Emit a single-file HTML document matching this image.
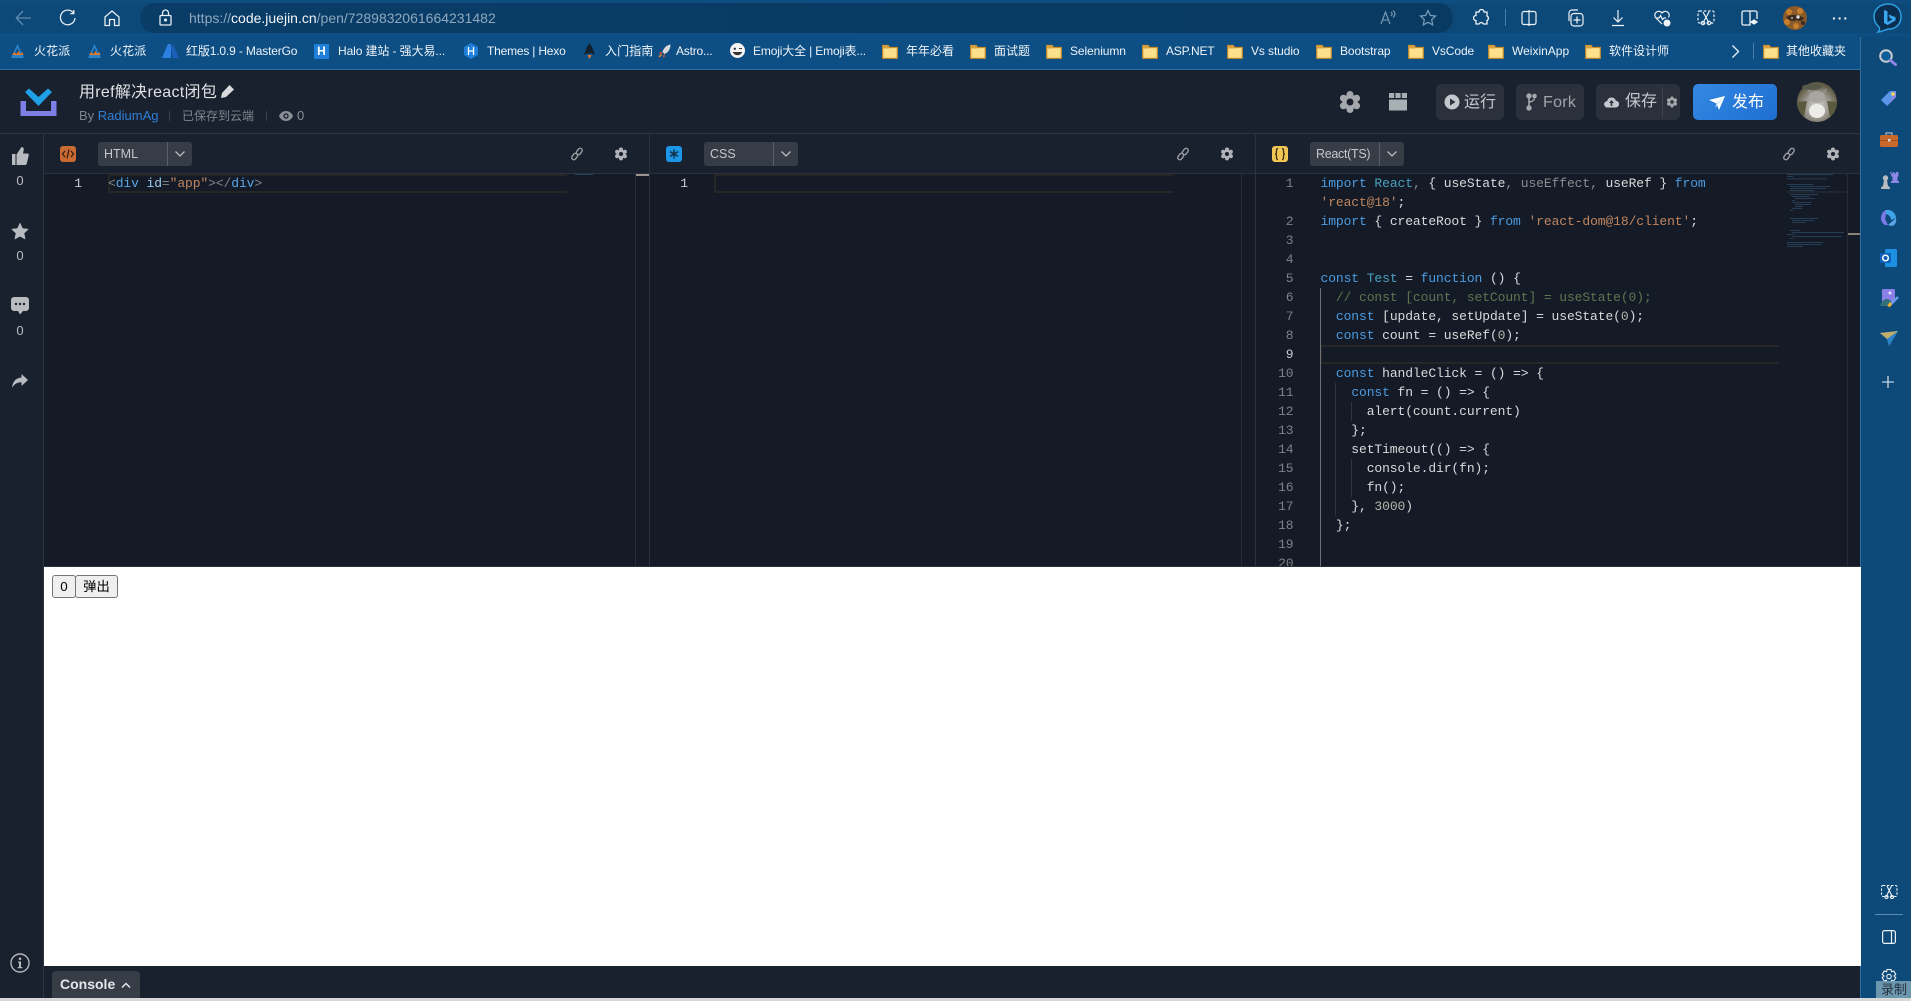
<!DOCTYPE html>
<html lang="zh"><head><meta charset="utf-8"><title>用ref解决react闭包</title>
<style>
*{box-sizing:border-box}
html,body{margin:0;padding:0;width:1911px;height:1001px;overflow:hidden;background:#1a212e;font-family:"Liberation Sans","Noto Sans CJK SC",sans-serif}
.a,.t,svg.i{position:absolute}
.t{white-space:nowrap;line-height:16px}
.bm{font-size:12px;color:#eef3f7;top:43px}
.dd{position:absolute;top:142px;width:94px;height:24px;background:#363d47;border-radius:3px;color:#c4c7cb;font-size:12.5px;line-height:24px;padding-left:6px}
.dd i{position:absolute;left:69px;top:0;width:1px;height:24px;background:#5a6069}
.dd svg{position:absolute;left:76px;top:8px}
.code{position:absolute;top:174px;height:392px;background:#141b26;overflow:hidden}
.ln{position:absolute;right:0;font:13px/19px "Liberation Mono",monospace;letter-spacing:-.1px;color:#7d8287;text-align:right}
.c{position:absolute;white-space:pre;font:13px/19px "Liberation Mono",monospace;letter-spacing:-.1px;color:#d8dadc}
.k{color:#4c9be0}.s{color:#c08560}.g{color:#8a8d90}.m{color:#4a9fc0}.n{color:#b0b8ac}.cm{color:#5d7550}.b{color:#58a5e8}.l{color:#9ecbf0}.p{color:#808488}
.hb{position:absolute;top:84px;height:36px;background:#2a313c;border-radius:5px}
.hl{position:absolute;background:#2c323d}
</style></head><body>
<svg width="0" height="0" style="position:absolute"><defs>
<symbol id="gear" viewBox="-10 -10 20 20"><g fill="currentColor"><circle r="6.4"/><circle cx="0" cy="-6.3" r="2.9"/><circle cx="5.5" cy="-3.15" r="2.9"/><circle cx="5.5" cy="3.15" r="2.9"/><circle cx="0" cy="6.3" r="2.9"/><circle cx="-5.5" cy="3.15" r="2.9"/><circle cx="-5.5" cy="-3.15" r="2.9"/></g><circle r="2.9" fill="var(--h,#1a212e)"/></symbol>
<symbol id="folder" viewBox="0 0 16 15"><path d="M.7 1.5h5.5l1.2 2h7.9v10.8H.7z" fill="#fde08c" stroke="#c98d28" stroke-width="1.2"/><path d="M.7 1.5h5.5l1.2 2v1H.7z" fill="#d9a03f"/></symbol>
<symbol id="link" viewBox="0 0 14 14"><g fill="none" stroke="currentColor" stroke-width="1.4"><rect x="7.2" y="1" width="4.2" height="7" rx="2.1" transform="rotate(38 9.3 4.5)"/><rect x="2.6" y="6" width="4.2" height="7" rx="2.1" transform="rotate(38 4.7 9.5)"/></g></symbol>
<symbol id="chev" viewBox="0 0 12 8"><path d="M1.5 1.5 6 6l4.5-4.5" fill="none" stroke="currentColor" stroke-width="1.3"/></symbol>
</defs></svg>

<!-- browser chrome -->
<div class="a" style="left:0;top:0;width:1911px;height:69px;background:#0d4d80"></div>
<div class="a" style="left:0;top:3px;width:1911px;height:30px;background:#0c4878"></div>
<div class="a" style="left:140px;top:3px;width:1313px;height:30px;border-radius:15px;background:linear-gradient(90deg,#093d68,#083a62)"></div>
<div class="a" style="left:0;top:33px;width:1861px;height:36px;background:#0d4f84"></div>
<div class="a" style="left:0;top:69px;width:1861px;height:1px;background:#2d6f9f"></div>
<svg class="i" style="left:14px;top:9px" width="20" height="18" viewBox="0 0 20 18" fill="none" stroke="#5d8cb0" stroke-width="1.3"><path d="M17 9H2.500M9 2 2.300 9 9 16"/></svg>
<svg class="i" style="left:59px;top:9px" width="18" height="18" viewBox="0 0 18 18" fill="none" stroke="#e8eef3" stroke-width="1.3"><path d="M14.500 4A7.300 7.300 0 1 0 16 9"/><path d="M14.800 1v3.600h-3.600"/></svg>
<svg class="i" style="left:104px;top:9px" width="16" height="18" viewBox="0 0 16 18" fill="none" stroke="#e8eef3" stroke-width="1.3"><path d="M1 8 8 2l7 6v8.500h-4.500v-6h-5v6H1z"/></svg>
<svg class="i" style="left:159px;top:9px" width="13" height="17" viewBox="0 0 13 17" fill="none" stroke="#e8eef3" stroke-width="1.3"><rect x="1" y="6.500" width="11" height="9.500" rx="1"/><path d="M3.500 6.500V4a3 3 0 0 1 6 0v2.500"/><circle cx="6.500" cy="11" r=".9" fill="#e8eef3"/></svg>
<span class="t" style="left:189px;top:10px;font-size:14px;letter-spacing:0;color:#8fa8bd">https://<span style="color:#f2f5f8">code.juejin.cn</span>/pen/7289832061664231482</span>
<svg class="i" style="left:1380px;top:9px" width="16" height="17" viewBox="0 0 16 17" fill="none" stroke="#7f9fb8" stroke-width="1.1"><path d="M1 15 5.500 3 10 15M2.500 11h6M11 3c1.500 1 1.500 3 0 4M13 1.500c2.500 2 2.500 5 0 7"/></svg>
<svg class="i" style="left:1419px;top:9px" width="18" height="18" viewBox="0 0 18 18" fill="none" stroke="#7f9fb8" stroke-width="1.2"><path d="m9 1.500 2.300 4.900 5.200.7-3.800 3.600 1 5.200L9 13.300l-4.700 2.600 1-5.200L1.500 7.100l5.200-.7z"/></svg>
<svg class="i" style="left:1473px;top:9px" width="17" height="17" viewBox="0 0 17 17" fill="none" stroke="#eef3f7" stroke-width="1.3"><path d="M6 3a2.500 2.500 0 0 1 5 0h3v4a2.500 2.500 0 0 1 0 4.500V15h-3.500a2.500 2.500 0 0 0-4.500 0H3v-3.500a2.500 2.500 0 0 1 0-5V3z"/></svg>
<div class="a" style="left:1505px;top:9px;width:1px;height:17px;background:#4a7ea6"></div>
<svg class="i" style="left:1521px;top:10px" width="16" height="16" viewBox="0 0 16 16" fill="none" stroke="#eef3f7" stroke-width="1.2"><rect x="1" y="1.500" width="14" height="13" rx="2"/><path d="M8 0v16"/></svg>
<svg class="i" style="left:1566px;top:9px" width="18" height="18" viewBox="0 0 18 18" fill="none" stroke="#eef3f7" stroke-width="1.2"><rect x="5" y="4.500" width="12" height="12.500" rx="3"/><path d="M11 7.500v7M7.500 11h7M3 12V4a3 3 0 0 1 3-3h6"/></svg>
<svg class="i" style="left:1610px;top:9px" width="16" height="18" viewBox="0 0 16 18" fill="none" stroke="#eef3f7" stroke-width="1.2"><path d="M8 1v12M3.500 8.500 8 13l4.500-4.500M2 16.500h12"/></svg>
<svg class="i" style="left:1653px;top:9px" width="18" height="18" viewBox="0 0 18 18" fill="none" stroke="#eef3f7" stroke-width="1.2"><path d="M9 15 2.500 8.500A3.900 3.900 0 0 1 9 4a3.900 3.900 0 0 1 6.500 4.500M3 9h3l1.500-2.500 2 4L11 9h2"/><circle cx="14" cy="14" r="3.500" fill="#eef3f7" stroke="none"/></svg>
<svg class="i" style="left:1697px;top:10px" width="18" height="16" viewBox="0 0 18 16" fill="none" stroke="#eef3f7" stroke-width="1.2"><rect x="1" y="1" width="16" height="12" rx="1.500" stroke-dasharray="2.500 1.800"/><path d="m6 2 5 9M12 2l-5 9"/><circle cx="6" cy="13" r="1.700"/><circle cx="12" cy="13" r="1.700"/></svg>
<svg class="i" style="left:1741px;top:10px" width="17" height="16" viewBox="0 0 17 16" fill="none" stroke="#eef3f7" stroke-width="1.3"><path d="M9 1H2.500A1.500 1.500 0 0 0 1 2.500v11A1.500 1.500 0 0 0 2.500 15H9zM9 1h5.500A1.500 1.500 0 0 1 16 2.500V9"/><path d="M10 12l3-2 3 2-3 2z" fill="#eef3f7"/></svg>
<svg class="i" style="left:1783px;top:6px" width="24" height="24" viewBox="0 0 24 24"><circle cx="12" cy="12" r="12" fill="#8a5a28"/><g fill="#c77f2e"><circle cx="6" cy="6" r="3"/><circle cx="17" cy="5" r="3"/><circle cx="4" cy="16" r="3"/><circle cx="13" cy="20" r="3"/></g><g fill="#3a2a20"><path d="M3 11c5-3 12-3 18 1-2 4-5 3-8 2-3 2-7 1-10-3z"/><circle cx="20" cy="17" r="2"/></g><circle cx="15" cy="11" r="1.700" fill="#ddd"/><circle cx="9" cy="12" r="1" fill="#b8b8b0"/></svg>
<span class="t" style="left:1832px;top:10px;font-size:14px;letter-spacing:1px;color:#eef3f7;font-weight:bold">···</span>
<svg class="i" style="left:1873px;top:2px" width="30" height="32" viewBox="0 0 30 32"><path d="M15 2c7.500 0 13 5 13 12.500S23 27 16 27c-3 0-7 3-11 3 2-2 2-4 1-5-3-2.500-5-6-5-10.500C1 7 7.500 2 15 2z" fill="#0a2e50" stroke="#2d9fe0" stroke-width="1.500"/><path d="M11 8l3.500 1.200v11l5-3-2.700-1.200-1.200-3.500 7 2.700v3.200l-8 4.600-3.600-2z" fill="#3aa8f0"/></svg>

<svg class="i" style="left:11px;top:44px" width="13" height="14" viewBox="0 0 13 14"><path d="M6.500 0 0 14h13z M6.500 4l3 6h-6z" fill="#2c82c8" fill-rule="evenodd"/><path d="M1 11l2.500-3 2 2 2-3 2 3 2-2 1 3z" fill="#e07a2c"/></svg><span class="t bm" style="left:34px;letter-spacing:.15px">火花派</span>
<svg class="i" style="left:88px;top:44px" width="13" height="14" viewBox="0 0 13 14"><path d="M6.500 0 0 14h13z M6.500 4l3 6h-6z" fill="#2c82c8" fill-rule="evenodd"/><path d="M1 11l2.500-3 2 2 2-3 2 3 2-2 1 3z" fill="#e07a2c"/></svg><span class="t bm" style="left:110px;letter-spacing:.15px">火花派</span>
<svg class="i" style="left:162px;top:44px" width="17" height="14" viewBox="0 0 17 14"><path d="M0 14 6 0h3v14z" fill="#2d7fe0"/><path d="M9 5l2-5 6 14h-6z" fill="#1c5fb8"/></svg><span class="t bm" style="left:186px;letter-spacing:-.15px">红版1.0.9 - MasterGo</span>
<div class="a" style="left:314px;top:44px;width:15px;height:15px;background:#1f7fd9;color:#fff;font:bold 12px/15px 'Liberation Sans';text-align:center">H</div><span class="t bm" style="left:338px;letter-spacing:-.1px">Halo 建站 - 强大易...</span>
<svg class="i" style="left:464px;top:43px" width="14" height="16" viewBox="0 0 14 16"><path d="M7 0l7 4v8l-7 4-7-4V4z" fill="#1f7fd9"/><path d="M4.500 4v8M9.500 4v8M4.500 8h5" stroke="#fff" stroke-width="1.300"/></svg><span class="t bm" style="left:487px;letter-spacing:-.2px">Themes | Hexo</span>
<svg class="i" style="left:584px;top:43px" width="11" height="16" viewBox="0 0 11 16"><path d="M5.500 0C3 3 1.500 8 0 12l3-1.500h5L11 12C9.500 8 8 3 5.500 0z" fill="#10202f"/><path d="M3.500 12 5.500 16l2-4z" fill="#e0762c"/></svg><span class="t bm" style="left:605px;letter-spacing:.1px">入门指南</span>
<svg class="i" style="left:658px;top:44px" width="13" height="14" viewBox="0 0 13 14"><path d="M12.500.5c-4 .5-7 3.500-8 7.500l2 2c3.500-1.500 6-4.500 6-9.500z" fill="#d8d8d8"/><path d="M4.500 8 2 8l-1 2 3-.5zM6.500 10l.5 2.500-2 1 .5-3z" fill="#c8553a"/><path d="M1 13l2.500-2.500" stroke="#e88a2a" stroke-width="1.500"/></svg><span class="t bm" style="left:676px;letter-spacing:-.2px">Astro...</span>
<svg class="i" style="left:730px;top:43px" width="15" height="15" viewBox="0 0 15 15"><circle cx="7.500" cy="7.500" r="7.500" fill="#f4f4f4"/><circle cx="4.800" cy="5.800" r="1.200" fill="#333"/><path d="M9 5.500h3M3.500 9.500c2 3 6 3 8 0z" stroke="#333" fill="#333" stroke-width=".9"/></svg><span class="t bm" style="left:753px;letter-spacing:-.15px">Emoji大全 | Emoji表...</span>
<svg class="i" style="left:882px;top:44px" width="16" height="15"><use href="#folder"/></svg><span class="t bm" style="left:906px">年年必看</span>
<svg class="i" style="left:970px;top:44px" width="16" height="15"><use href="#folder"/></svg><span class="t bm" style="left:994px">面试题</span>
<svg class="i" style="left:1046px;top:44px" width="16" height="15"><use href="#folder"/></svg><span class="t bm" style="left:1070px;letter-spacing:-.1px">Seleniumn</span>
<svg class="i" style="left:1142px;top:44px" width="16" height="15"><use href="#folder"/></svg><span class="t bm" style="left:1166px;letter-spacing:-.2px">ASP.NET</span>
<svg class="i" style="left:1227px;top:44px" width="16" height="15"><use href="#folder"/></svg><span class="t bm" style="left:1251px;letter-spacing:-.1px">Vs studio</span>
<svg class="i" style="left:1316px;top:44px" width="16" height="15"><use href="#folder"/></svg><span class="t bm" style="left:1340px;letter-spacing:-.1px">Bootstrap</span>
<svg class="i" style="left:1408px;top:44px" width="16" height="15"><use href="#folder"/></svg><span class="t bm" style="left:1432px;letter-spacing:-.1px">VsCode</span>
<svg class="i" style="left:1488px;top:44px" width="16" height="15"><use href="#folder"/></svg><span class="t bm" style="left:1512px;letter-spacing:0">WeixinApp</span>
<svg class="i" style="left:1585px;top:44px" width="16" height="15"><use href="#folder"/></svg><span class="t bm" style="left:1609px">软件设计师</span>
<svg class="i" style="left:1731px;top:44px" width="9" height="15" viewBox="0 0 9 15" fill="none" stroke="#eef3f7" stroke-width="1.300"><path d="m1.500 1.500 6 6-6 6"/></svg>
<div class="a" style="left:1753px;top:43px;width:1px;height:16px;background:#4a7ea6"></div>
<svg class="i" style="left:1763px;top:44px" width="16" height="15"><use href="#folder"/></svg><span class="t bm" style="left:1786px">其他收藏夹</span>

<!-- right edge panel -->
<div class="a" style="left:1861px;top:37px;width:50px;height:964px;background:#0d4a7a"></div>
<div class="a" style="left:1860px;top:37px;width:1px;height:964px;background:#2d6f9f"></div>
<svg class="i" style="left:1878px;top:49px" width="20" height="18" viewBox="0 0 20 18"><circle cx="8" cy="7" r="5.800" fill="#0f5e9c" stroke="#c8ccd0" stroke-width="2"/><path d="m12.500 11.500 5 4" stroke="#8f87e8" stroke-width="3" stroke-linecap="round"/></svg>
<svg class="i" style="left:1880px;top:90px" width="17" height="17" viewBox="0 0 17 17"><path d="M1 10 10 1h6v6l-9 9z" fill="#5c96e8"/><path d="M9 14l7-7V1" fill="#8f87e8"/><circle cx="13" cy="4" r="1.800" fill="#f4d35e"/></svg>
<svg class="i" style="left:1880px;top:131px" width="18" height="16" viewBox="0 0 18 16"><path d="M6 4V2h6v2" fill="none" stroke="#b0b0b8" stroke-width="1.300"/><rect y="4" width="18" height="12" rx="1.500" fill="#c8682a"/><rect y="9" width="18" height="1" fill="#a05020"/><rect x="8" y="8" width="2.500" height="2.500" fill="#d8d8d8"/></svg>
<svg class="i" style="left:1880px;top:171px" width="19" height="19" viewBox="0 0 19 19"><path d="M10 1h1.500v1.500h1.500V1h1.500v1.500H16V1h2.500v4l-1 1v4h1.500v2h-8v-2h1.500V6l-1-1z" fill="#8f87e8"/><circle cx="5.500" cy="7" r="2.700" fill="#b8bcc0"/><path d="M4 9h3l1 6H3zM1 18c0-2 1-3 3-3h3c2 0 3 1 3 3z" fill="#b8bcc0"/></svg>
<svg class="i" style="left:1880px;top:209px" width="17" height="19" viewBox="0 0 17 19"><path d="M6 1c5-1 10 3 10 8l-5 2c0-2-1-5-5-6z" fill="#3fa5e8"/><path d="M1 9c0-3 2-7 5-8 0 3 0 6-1 9l3 6c-4 1-7-3-7-7z" fill="#7c79e8"/><path d="M8 16l8-7c1 5-2 10-8 7z" fill="#5aa5e8"/></svg>
<svg class="i" style="left:1880px;top:249px" width="17" height="18" viewBox="0 0 17 18"><rect x="5" y="0" width="12" height="18" rx="1.500" fill="#1d8fe0"/><rect x="0" y="4" width="11" height="10" rx="1.500" fill="#0f60b8"/><circle cx="5.500" cy="9" r="2.800" fill="none" stroke="#fff" stroke-width="1.500"/></svg>
<svg class="i" style="left:1880px;top:288px" width="20" height="20" viewBox="0 0 20 20"><rect x="2" y="1" width="13" height="14" rx="1.500" fill="#8b7fe8"/><path d="M0 18c1-4 4-7 7-7s5 3 5 6l-3 1z" fill="#2f7079"/><circle cx="10" cy="5" r="1.500" fill="#e8e4ff"/><path d="M10 17 18 9" stroke="#6b9de8" stroke-width="2.500"/><path d="M8.500 18.500 11 15" stroke="#f0b030" stroke-width="3"/></svg>
<svg class="i" style="left:1880px;top:331px" width="18" height="15" viewBox="0 0 18 15"><path d="M0 2 18 0 9 15 7 8z" fill="#3fa5e8"/><path d="M18 0 7 8 9 15z" fill="#2b82c8"/><path d="M0 2 18 0 7 8z" fill="#f0b040" opacity=".75"/></svg>
<svg class="i" style="left:1882px;top:376px" width="12" height="12" viewBox="0 0 12 12" stroke="#e8eef3" stroke-width="1.100"><path d="M6 0v12M0 6h12"/></svg>
<svg class="i" style="left:1881px;top:885px" width="17" height="14" viewBox="0 0 17 14" fill="none" stroke="#eef3f7" stroke-width="1.100"><rect x=".5" y=".5" width="15.500" height="11" rx="1.500" stroke-dasharray="2.500 1.500"/><path d="m6 1 4.500 9M10.500 1 6 10"/><circle cx="5.500" cy="12" r="1.500"/><circle cx="11" cy="12" r="1.500"/></svg>
<div class="a" style="left:1875px;top:914px;width:28px;height:1px;background:#5b8db3"></div>
<svg class="i" style="left:1882px;top:930px" width="14" height="14" viewBox="0 0 14 14" fill="none" stroke="#eef3f7" stroke-width="1.200"><rect x=".6" y=".6" width="12.800" height="12.800" rx="2"/><path d="M9.500.6v12.800"/></svg>
<svg class="i" style="left:1881px;top:968px" width="16" height="17" viewBox="0 0 16 17" fill="none" stroke="#eef3f7" stroke-width="1.100"><path d="M6 1.500h4l.5 2.300 2.300-.8 2 3.400-1.800 1.600 1.800 1.600-2 3.400-2.300-.8-.5 2.300H6l-.5-2.300-2.300.8-2-3.400L3 8 1.200 6.400l2-3.400 2.300.8z"/><circle cx="8" cy="8.500" r="2.200"/></svg>
<div class="a" style="left:1876px;top:981px;width:35px;height:17px;background:#6d96af;color:#24323d;font-size:13px;line-height:17px;padding-left:5px">录制</div>

<!-- header -->
<div class="a" style="left:0;top:70px;width:1860px;height:63px;background:#1a212e"></div>
<div class="a" style="left:0;top:133px;width:1860px;height:1px;background:#2f353f"></div>
<svg class="i" style="left:20px;top:87px" width="37" height="30" viewBox="0 0 37 30"><path d="M.5 14H6v10h25V14h5.500v15H.5z" fill="#7d7fe6"/><path d="M9 1.500 18.500 10l9.500-8.500 4 3.500-13.500 14L5 5z" fill="#1fa0e6"/></svg>
<span class="t" style="left:79px;top:84px;font-size:16px;line-height:18px;letter-spacing:.3px;color:#dfe1e4">用ref解决react闭包</span>
<svg class="i" style="left:221px;top:85px" width="13" height="13" viewBox="0 0 13 13"><path d="M8.500 0 13 4.500 5 12 0 13l1-5z" fill="#d8dadc"/></svg>
<span class="t" style="left:79px;top:108px;font-size:13px;color:#7f858e">By <span style="color:#2f7fd8">RadiumAg</span></span>
<div class="a" style="left:169px;top:111px;width:1px;height:10px;background:#3a404a"></div>
<span class="t" style="left:182px;top:108px;font-size:12px;color:#7f858e">已保存到云端</span>
<div class="a" style="left:266px;top:111px;width:1px;height:10px;background:#3a404a"></div>
<svg class="i" style="left:279px;top:110px" width="14" height="12" viewBox="0 0 14 12"><path d="M7 1C3.500 1 1 3.500 0 6c1 2.500 3.500 5 7 5s6-2.500 7-5c-1-2.500-3.500-5-7-5z" fill="#8a8f97"/><circle cx="7" cy="6" r="2.700" fill="#1a212e"/><circle cx="7" cy="6" r="1.400" fill="#8a8f97"/></svg>
<span class="t" style="left:297px;top:108px;font-size:13px;color:#8a8f97">0</span>

<svg class="i" style="left:1338px;top:90px;color:#a4a7ab" width="24" height="24"><use href="#gear"/></svg>
<svg class="i" style="left:1389px;top:93px" width="18" height="18" viewBox="0 0 18 18" fill="#a9b0b4"><rect width="5.200" height="5"/><rect x="6.400" width="5.200" height="5"/><rect x="12.800" width="5.200" height="5"/><rect y="6.500" width="18" height="11"/></svg>
<div class="hb" style="left:1436px;width:68px"></div>
<svg class="i" style="left:1444px;top:94px" width="16" height="16" viewBox="0 0 16 16"><circle cx="8" cy="8" r="7.500" fill="#c4c7cb"/><path d="M6 4.500v7l5.500-3.500z" fill="#2a313c"/></svg>
<span class="t" style="left:1464px;top:94px;font-size:16px;line-height:18px;color:#c4c7cb">运行</span>
<div class="hb" style="left:1516px;width:68px"></div>
<svg class="i" style="left:1526px;top:93px" width="11" height="18" viewBox="0 0 11 18" fill="#a4a7ab"><circle cx="3" cy="3" r="2.700"/><circle cx="8.500" cy="3" r="2.300"/><circle cx="3" cy="15" r="2.700"/><path d="M2.200 3h1.600v12H2.200zM8 4.500h1.200C9 8 6.500 9 3 10V8.500c2.500-.5 5-1.500 5-4z"/></svg>
<span class="t" style="left:1543px;top:94px;font-size:16px;line-height:18px;letter-spacing:.3px;color:#a0a4a9">Fork</span>
<div class="hb" style="left:1596px;width:84px"></div>
<div class="a" style="left:1662px;top:87px;width:1px;height:30px;background:#3f4650"></div>
<svg class="i" style="left:1604px;top:96px" width="15" height="12" viewBox="0 0 15 12"><path d="M3.500 11.500a3.200 3.200 0 0 1-.4-6.400 4.500 4.500 0 0 1 8.700-.4A3.400 3.400 0 0 1 11.500 11.500z" fill="#c4c7cb"/><path d="M7.500 4 5 7h1.700v3h1.600V7H10z" fill="#2a313c"/></svg>
<span class="t" style="left:1625px;top:93px;font-size:16px;line-height:18px;color:#c4c7cb">保存</span>
<svg class="i" style="--h:#2a313c;left:1666px;top:96px;color:#a4a7ab" width="12" height="12"><use href="#gear"/></svg>
<div class="hb" style="left:1693px;width:84px;background:linear-gradient(135deg,#3488e2,#1f6fd2)"></div>
<svg class="i" style="left:1709px;top:96px" width="16" height="14" viewBox="0 0 16 14"><path d="M0 4 16 0 10 14 7.500 7.500z" fill="#fff"/><path d="M16 0 7.500 7.500 6 12z" fill="#d6e6f8"/></svg>
<span class="t" style="left:1732px;top:94px;font-size:16px;line-height:18px;color:#fff">发布</span>
<svg class="i" style="left:1797px;top:82px" width="40" height="40" viewBox="0 0 40 40"><defs><radialGradient id="cat" cx=".5" cy=".6" r=".55"><stop offset="0" stop-color="#d8d8d2"/><stop offset=".6" stop-color="#96938a"/><stop offset="1" stop-color="#5f5a44"/></radialGradient></defs><ellipse cx="20" cy="20" rx="20" ry="20" fill="url(#cat)"/><path d="M10 6l2 9h16l2-9-7 4h-6z" fill="#8f8c84"/><ellipse cx="20" cy="15" rx="8" ry="6" fill="#a9a6a0"/><ellipse cx="15" cy="5" rx="10" ry="3" fill="#575a4a"/><ellipse cx="20" cy="29" rx="8" ry="7" fill="#ecece8"/><path d="M0 20a20 20 0 0 0 7 15l3-16zM40 20a20 20 0 0 1-7 15l-3-16z" fill="#5c5a3e"/></svg>

<!-- sidebar -->
<div class="a" style="left:0;top:134px;width:44px;height:864px;background:#1a212e"></div>
<div class="a" style="left:43px;top:134px;width:1px;height:864px;background:#2f353f"></div>
<svg class="i" style="left:12px;top:147px" width="17" height="18" viewBox="0 0 17 18" fill="#b8bbbf"><rect y="7" width="3.500" height="11"/><path d="M4.500 7.500 9.500 0c1.500 0 2.300 1 2.300 2.500L11 6.500h4.500c1 0 1.500 1 1.200 2l-2 8.200c-.2.800-.8 1.300-1.700 1.300H4.500z"/></svg>
<span class="t" style="left:16px;top:173px;font-size:13px;color:#b9bdc2;width:8px;text-align:center">0</span>
<svg class="i" style="left:11px;top:222px" width="18" height="18" viewBox="0 0 18 18" fill="#b8bbbf"><path d="m9 .5 2.700 5.700 6.100.8-4.500 4.300 1.200 6.200L9 14.500l-5.500 3 1.200-6.200L.2 7l6.100-.8z"/></svg>
<span class="t" style="left:16px;top:248px;font-size:13px;color:#b9bdc2;width:8px;text-align:center">0</span>
<svg class="i" style="left:11px;top:297px" width="18" height="18" viewBox="0 0 18 18"><path d="M3 0h12a3 3 0 0 1 3 3v8a3 3 0 0 1-3 3h-3l-3 3.500L7 14H3a3 3 0 0 1-3-3V3a3 3 0 0 1 3-3z" fill="#b8bbbf"/><circle cx="5" cy="7" r="1.200" fill="#1a212e"/><circle cx="9" cy="7" r="1.200" fill="#1a212e"/><circle cx="13" cy="7" r="1.200" fill="#1a212e"/></svg>
<span class="t" style="left:16px;top:323px;font-size:13px;color:#b9bdc2;width:8px;text-align:center">0</span>
<svg class="i" style="left:12px;top:374px" width="16" height="14" viewBox="0 0 16 14"><path d="M9.500 0 16 6l-6.500 6V8.300C5 8.300 2.500 10 0 14c.5-6 3.500-10 9.500-10.500z" fill="#b8bbbf"/></svg>
<svg class="i" style="left:10px;top:953px" width="20" height="20" viewBox="0 0 20 20"><circle cx="10" cy="10" r="9" fill="none" stroke="#b4b7bb" stroke-width="1.400"/><circle cx="10" cy="5.800" r="1.300" fill="#b4b7bb"/><path d="M8 8.500h3v5.500h1.300v1.200H7.700V14H9V9.700H8z" fill="#b4b7bb"/></svg>

<!-- editor toolbars -->
<div class="a" style="left:44px;top:134px;width:1816px;height:40px;background:#1a212e"></div>
<div class="hl" style="left:44px;top:173px;width:1816px;height:1px"></div>
<div class="hl" style="left:649px;top:134px;width:1px;height:432px"></div>
<div class="hl" style="left:1255px;top:134px;width:1px;height:432px"></div>

<svg class="i" style="left:60px;top:146px" width="16" height="16" viewBox="0 0 16 16"><rect width="16" height="16" rx="3" fill="#c96a30"/><path d="M5 5 2.500 8 5 11M11 5l2.500 3-2.500 3M9 3.500 7 12.500" fill="none" stroke="#2a1a10" stroke-width="1.200"/></svg>
<div class="dd" style="left:98px">HTML<i></i><svg width="12" height="8" style="color:#b8bbbf"><use href="#chev"/></svg></div>
<svg class="i" style="left:570px;top:147px;color:#9a9ea3" width="14" height="14"><use href="#link"/></svg>
<svg class="i" style="left:614px;top:147px;color:#b0b3b7" width="14" height="14"><use href="#gear"/></svg>

<svg class="i" style="left:666px;top:146px" width="16" height="16" viewBox="0 0 16 16"><rect width="16" height="16" rx="3" fill="#1c97e8"/><path d="M8 3.500v9M4 5.700l8 4.600M12 5.700l-8 4.600" stroke="#13324a" stroke-width="1.500"/></svg>
<div class="dd" style="left:704px">CSS<i></i><svg width="12" height="8" style="color:#b8bbbf"><use href="#chev"/></svg></div>
<svg class="i" style="left:1176px;top:147px;color:#9a9ea3" width="14" height="14"><use href="#link"/></svg>
<svg class="i" style="left:1220px;top:147px;color:#b0b3b7" width="14" height="14"><use href="#gear"/></svg>

<svg class="i" style="left:1272px;top:146px" width="16" height="16" viewBox="0 0 16 16"><rect width="16" height="16" rx="3" fill="#f0c654"/><path d="M6 2.500C4 2.500 4.500 5 4.500 6.500S3 8 3 8s1.500 0 1.500 1.500S4 13.500 6 13.500M10 2.500c2 0 1.500 2.500 1.500 4S13 8 13 8s-1.500 0-1.500 1.500.5 4-1.500 4" fill="none" stroke="#3a2a10" stroke-width="1.300"/></svg>
<div class="dd" style="left:1310px;letter-spacing:-.3px">React(TS)<i></i><svg width="12" height="8" style="color:#b8bbbf"><use href="#chev"/></svg></div>
<svg class="i" style="left:1782px;top:147px;color:#9a9ea3" width="14" height="14"><use href="#link"/></svg>
<svg class="i" style="left:1826px;top:147px;color:#b0b3b7" width="14" height="14"><use href="#gear"/></svg>

<!-- pane 1 -->
<div class="code" style="left:44px;width:605px">
  <div class="ln" style="left:0;width:38px;top:0;color:#c5cbd1">1</div>
  <div class="a" style="left:64px;top:0;width:459px;height:19px;border:2px solid #262626;border-right:0"></div>
  <div class="c" style="left:64px;top:0"><span class="p">&lt;</span><span class="b">div</span> <span class="l">id</span><span class="p">=</span><span class="s">"app"</span><span class="p">&gt;&lt;/</span><span class="b">div</span><span class="p">&gt;</span></div>
  <div class="a" style="left:591px;top:0;width:1px;height:392px;background:#262c36"></div>
  <div class="a" style="left:592px;top:0;width:13px;height:2px;background:#9a938c"></div>
  <div class="a" style="left:531px;top:0;width:18px;height:1px;background:#2c425a"></div>
</div>

<!-- pane 2 -->
<div class="code" style="left:650px;width:605px">
  <div class="ln" style="left:0;width:38px;top:0;color:#c5cbd1">1</div>
  <div class="a" style="left:64px;top:0;width:459px;height:19px;border:2px solid #262626;border-right:0"></div>
  <div class="a" style="left:591px;top:0;width:1px;height:392px;background:#262c36"></div>
</div>

<!-- pane 3 -->
<div class="code" style="left:1256px;width:604px">
  <div class="a" style="left:64px;top:171px;width:459px;height:19px;border:2px solid #262626;border-right:0"></div>
  <div class="a" style="left:64px;top:114px;width:1px;height:278px;background:#6d7176"></div>
  <div class="a" style="left:79px;top:209px;width:1px;height:133px;background:#2e3540"></div>
  <div class="a" style="left:95px;top:228px;width:1px;height:19px;background:#2e3540"></div>
  <div class="a" style="left:95px;top:285px;width:1px;height:38px;background:#2e3540"></div>
  <div class="ln" style="left:0;width:37.500px;top:0">1<br><br>2<br>3<br>4<br>5<br>6<br>7<br>8<br><span style="color:#c5cbd1">9</span><br>10<br>11<br>12<br>13<br>14<br>15<br>16<br>17<br>18<br>19<br>20</div>
  <div class="c" style="left:64.500px;top:0"><span class="k">import</span> <span class="m">React</span><span class="g">,</span> { useState<span class="g">,</span> <span class="g">useEffect</span><span class="g">,</span> useRef } <span class="k">from</span>
<span class="s">'react@18'</span>;
<span class="k">import</span> { createRoot } <span class="k">from</span> <span class="s">'react-dom@18/client'</span>;


<span class="k">const</span> <span class="m">Test</span> = <span class="k">function</span> () {
  <span class="cm">// const [count, setCount] = useState(0);</span>
  <span class="k">const</span> [update, setUpdate] = useState(<span class="n">0</span>);
  <span class="k">const</span> count = useRef(<span class="n">0</span>);

  <span class="k">const</span> handleClick = () =&gt; {
    <span class="k">const</span> fn = () =&gt; {
      alert(count.current)
    };
    setTimeout(() =&gt; {
      console.dir(fn);
      fn();
    }, <span class="n">3000</span>)
  };</div>
  <div class="a" style="left:591px;top:0;width:1px;height:392px;background:#262c36"></div>
  <div class="a" style="left:592px;top:59px;width:12px;height:2px;background:#8a8178"></div>
  <svg class="i" style="left:531px;top:0;opacity:.55" width="60" height="90" viewBox="0 0 60 90"><rect x="0" y="17" width="60" height="2" fill="#2b3038"/>
    <g fill="#3e6a92"><rect y="0" width="46" height=".8"/><rect y="2" width="6" height=".8"/><rect y="4.500" width="40" height=".8"/><rect y="10" width="26" height=".8"/><rect x="3" y="12" width="40" height=".8"/><rect x="3" y="14" width="36" height=".8"/><rect x="3" y="16" width="24" height=".8"/><rect x="3" y="20" width="28" height=".8"/><rect x="5" y="22" width="18" height=".8"/><rect x="8" y="24" width="20" height=".8"/><rect x="5" y="26" width="3" height=".8"/><rect x="5" y="28" width="20" height=".8"/><rect x="8" y="30" width="16" height=".8"/><rect x="8" y="32" width="8" height=".8"/><rect x="5" y="34" width="10" height=".8"/><rect x="3" y="36" width="3" height=".8"/><rect x="3" y="44" width="28" height=".8"/><rect x="5" y="46" width="22" height=".8"/><rect x="5" y="48" width="14" height=".8"/><rect x="3" y="56" width="10" height=".8"/><rect x="5" y="58" width="52" height=".8"/><rect x="0" y="60" width="8" height=".8"/><rect x="5" y="62" width="50" height=".8"/><rect x="3" y="64" width="3" height=".8"/><rect y="68" width="36" height=".8"/><rect y="70" width="34" height=".8"/><rect y="72" width="16" height=".8"/></g></svg>
</div>

<!-- preview -->
<div class="a" style="left:44px;top:566px;width:1816px;height:1px;background:#2b323d"></div>
<div class="a" style="left:44px;top:567px;width:1817px;height:399px;background:#fff">
  <div class="a" style="left:8px;top:8px;width:24px;height:23px;background:#efefef;border:1px solid #767676;border-radius:3px;font-size:13.333px;line-height:21px;text-align:center;color:#000">0</div>
  <div class="a" style="left:31px;top:8px;width:43px;height:23px;background:#efefef;border:1px solid #767676;border-radius:3px;font-size:13.333px;line-height:21px;text-align:center;color:#000">弹出</div>
</div>

<!-- console -->
<div class="a" style="left:44px;top:966px;width:1816px;height:32px;background:#1a212e"></div>
<div class="a" style="left:52px;top:971px;width:88px;height:27px;background:#363d47;border-radius:4px 4px 0 0;color:#e4e7ea;font:bold 14px/27px 'Liberation Sans';padding-left:8px">Console</div>
<svg class="i" style="left:121px;top:982px" width="10" height="7" viewBox="0 0 10 7" fill="none" stroke="#e4e7ea" stroke-width="1.500"><path d="M1 5.500 5 1.500 9 5.500"/></svg>
<div class="a" style="left:0;top:998px;width:1911px;height:3px;background:#d8d8d8"></div>
</body></html>
